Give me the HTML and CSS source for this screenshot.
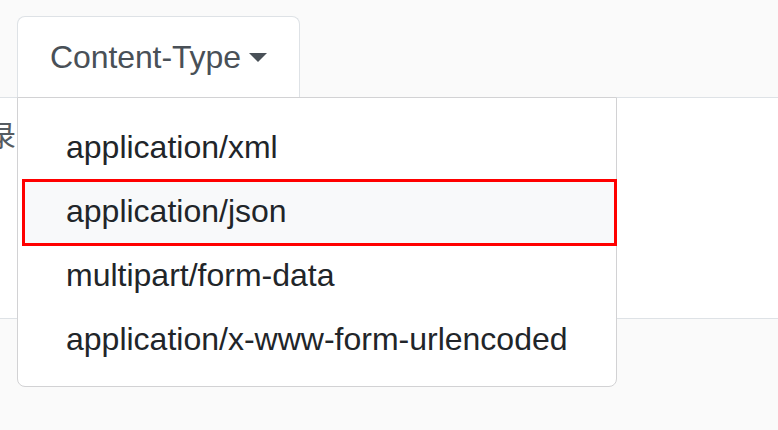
FILE: index.html
```html
<!DOCTYPE html>
<html lang="zh">
<head>
<meta charset="utf-8">
<title>Content-Type</title>
<link rel="stylesheet" href="styles.css">
</head>
<body>
<ul class="tabs">
  <li class="tab">
    <span class="tab-link">Content-Type<span class="caret"></span></span>
    <div class="menu">
      <div class="item">application/xml</div>
      <div class="item item-marked">application/json</div>
      <div class="item">multipart/form-data</div>
      <div class="item">application/x-www-form-urlencoded</div>
    </div>
  </li>
</ul>
<div class="panel">
  <div class="panel-text">记录</div>
</div>
</body>
</html>
```

FILE: styles.css
```css
html, body {
  margin: 0;
  padding: 0;
}
body {
  background: #fafafa;
  font-family: "Liberation Sans", Arial, "Noto Sans CJK SC", sans-serif;
  width: 778px;
  height: 430px;
  overflow: hidden;
}
.tabs {
  list-style: none;
  margin: 0;
  padding: 16px 0 0 17px;
  display: flex;
  border-bottom: 1px solid #dee2e6;
}
.tab {
  position: relative;
  background: #fff;
  border: 1px solid #dee2e6;
  border-bottom: none;
  border-radius: 8px 8px 0 0;
  padding: 16px 32px 16px 32px;
  z-index: 2;
}
.tab-link {
  display: flex;
  align-items: center;
  white-space: nowrap;
  font-size: 32px;
  line-height: 48px;
  color: #495057;
  letter-spacing: -0.1px;
}
.caret {
  display: inline-block;
  margin-left: 8px;
  margin-top: 1px;
  width: 0;
  height: 0;
  border-top: 9px solid #495057;
  border-left: 9px solid transparent;
  border-right: 9px solid transparent;
}
.menu {
  position: absolute;
  top: 100%;
  left: -1px;
  width: 598px;
  background: #fff;
  border: 1px solid #d2d2d4;
  border-radius: 0 0 8px 8px;
  padding: 17px 0 15px;
  z-index: 3;
}
.item {
  position: relative;
  z-index: 0;
  padding: 8px 48px;
  font-size: 32px;
  line-height: 48px;
  color: #212529;
  white-space: nowrap;
}
.item-marked::before {
  content: "";
  position: absolute;
  left: 4px;
  top: 0;
  right: -1px;
  bottom: -3px;
  border: 3px solid #ff0000;
  background: #f8f9fa;
  z-index: -1;
}
.panel {
  background: #fff;
  height: 220px;
  border-bottom: 1px solid #dee2e6;
  overflow: hidden;
}
.panel-text {
  padding-top: 22px;
  margin-left: -42px;
  font-size: 29px;
  line-height: 29px;
  color: #555b61;
  font-family: "Noto Sans CJK SC", sans-serif;
}
```
